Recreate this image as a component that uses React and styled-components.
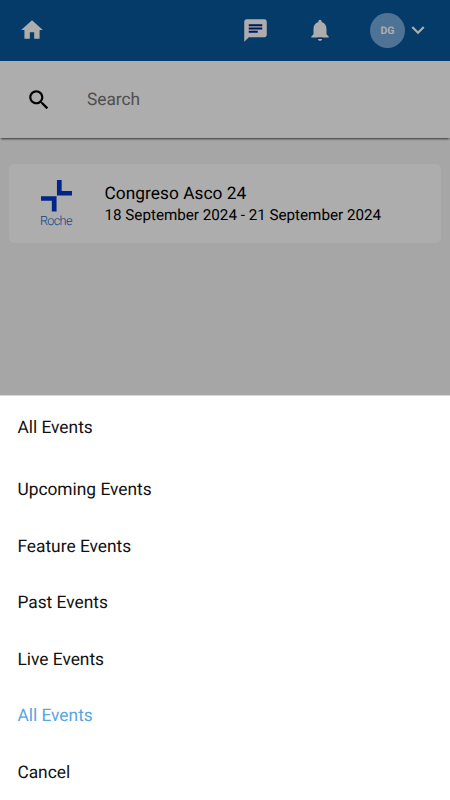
import { useState } from 'react';
import { styled, createGlobalStyle } from 'styled-components';

const GlobalStyle = createGlobalStyle`
  * {
    box-sizing: border-box;
  }

  body {
    margin: 0;
    font-family: Roboto, 'Liberation Sans', sans-serif;
    text-rendering: geometricPrecision;
  }
`;

const options = [
  { id: 'upcoming', label: 'Upcoming Events' },
  { id: 'feature', label: 'Feature Events' },
  { id: 'past', label: 'Past Events' },
  { id: 'live', label: 'Live Events' },
  { id: 'all', label: 'All Events' },
  { id: 'cancel', label: 'Cancel' },
];

const HomeIcon = () => (
  <Icon $size={26} viewBox="0 0 24 24">
    <path d="M10 20v-6h4v6h5v-8h3L12 3 2 12h3v8z" />
  </Icon>
);

const ChatIcon = () => (
  <Icon $size={27} viewBox="0 0 24 24">
    <path d="M4 2h16c1.100 0 2 .9 2 2v12c0 1.100-.9 2-2 2H6l-4 4V4c0-1.100.9-2 2-2z" />
    <path fill="#00208c" d="M6 6.500h12v1.800H6zM6 9.400h12v1.800H6zM6 12.300h8v1.800H6z" />
  </Icon>
);

const BellIcon = () => (
  <Icon $size={26} viewBox="0 0 24 24">
    <path d="M12 22c1.100 0 2-.9 2-2h-4c0 1.100.89 2 2 2zm6-6v-5c0-3.070-1.640-5.640-4.500-6.320V4c0-.83-.67-1.500-1.500-1.500s-1.500.67-1.500 1.500v.68C7.630 5.360 6 7.920 6 11v5l-2 2v1h16v-1l-2-2z" />
    <path fill="#00208c" d="M9.500 19.100h5v.9h-5z" />
  </Icon>
);

const ArrowIcon = () => (
  <Icon $size={26} viewBox="0 0 24 24">
    <path d="M7.410 8.590 12 13.170l4.590-4.580L18 10l-6 6-6-6z" />
  </Icon>
);

const SearchIcon = () => (
  <Icon $size={26} viewBox="0 0 24 24">
    <path d="M15.500 14h-.79l-.28-.27C15.410 12.590 16 11.110 16 9.500 16 5.910 13.090 3 9.500 3S3 5.910 3 9.500 5.910 16 9.500 16c1.610 0 3.090-.59 4.230-1.570l.27.28v.79l5 4.990L20.490 19l-4.990-5zm-6 0C7.010 14 5 11.990 5 9.500S7.010 5 9.500 5 14 7.010 14 9.500 11.990 14 9.500 14z" />
  </Icon>
);

const App = () => {
  const [selected, setSelected] = useState('all');
  const [search, setSearch] = useState('');

  return (
    <Screen>
      <GlobalStyle />
      <Header>
        <HomeButton>
          <HomeIcon />
        </HomeButton>
        <Actions>
          <ChatIcon />
          <BellIcon />
          <Profile>
            <Avatar>DG</Avatar>
            <ArrowIcon />
          </Profile>
        </Actions>
      </Header>

      <SearchBar>
        <SearchIcon />
        <SearchInput
          placeholder="Search"
          value={search}
          onChange={(e) => setSearch(e.target.value)}
        />
      </SearchBar>

      <EventList>
        <EventCard>
          <Brand>
            <BrandMark viewBox="0 0 32 32">
              <path d="M16.200 0h4.800v11.200h11v4.600H16.200zM0 16.400h15.800V32h-4.800V21H0z" />
            </BrandMark>
            <BrandName>Roche</BrandName>
          </Brand>
          <EventInfo>
            <EventTitle>Congreso Asco 24</EventTitle>
            <EventDate>18 September 2024 - 21 September 2024</EventDate>
          </EventInfo>
        </EventCard>
      </EventList>

      <Backdrop>
        <Sheet>
          <SheetTitle>All Events</SheetTitle>
          {options.map((option) => (
            <Option
              key={option.id}
              $active={selected === option.id}
              onClick={() => setSelected(option.id)}
            >
              {option.label}
            </Option>
          ))}
        </Sheet>
      </Backdrop>
    </Screen>
  );
};

const Screen = styled.div`
  position: relative;
  height: 800px;
  overflow: hidden;
  background-color: #f5f5f5;
`;

const Icon = styled.svg`
  display: block;
  flex-shrink: 0;
  width: ${(props) => props.$size}px;
  height: ${(props) => props.$size}px;
  fill: currentColor;
`;

const Header = styled.header`
  display: flex;
  align-items: center;
  justify-content: space-between;
  height: 61px;
  padding: 0 19px 1px;
  color: #fff;
  background-color: #08589a;
`;

const HomeButton = styled.div`
  cursor: pointer;
`;

const Actions = styled.div`
  display: flex;
  align-items: center;
  gap: 37.5px;
`;

const Profile = styled.div`
  display: flex;
  align-items: center;
  cursor: pointer;
`;

const Avatar = styled.div`
  display: flex;
  align-items: center;
  justify-content: center;
  width: 35px;
  height: 35px;
  border-radius: 50%;
  font-size: 10.5px;
  font-weight: 700;
  background-color: #73aadc;
`;

const SearchBar = styled.div`
  display: flex;
  align-items: center;
  gap: 35px;
  height: 77px;
  padding: 0 26px;
  background-color: #fff;
  box-shadow: 0 2px 2px -1px rgba(0, 0, 0, 0.7);
`;

const SearchInput = styled.input`
  flex: 1;
  padding: 0;
  border: none;
  outline: none;
  font-family: inherit;
  font-size: 17.3px;
  text-rendering: inherit;
  background-color: transparent;

  &::placeholder {
    color: #757575;
  }
`;

const EventList = styled.div`
  padding: 26px 9px;
`;

const EventCard = styled.div`
  display: flex;
  height: 78.5px;
  padding: 16px 31px;
  border-radius: 5px;
  background-color: #fff;
`;

const Brand = styled.div`
  width: 64.5px;
`;

const BrandMark = styled.svg`
  display: block;
  width: 31.5px;
  height: 31.5px;
  margin: 0.4px 0 0 0.6px;
  fill: #0038c8;
`;

const BrandName = styled.div`
  font-size: 12.7px;
  font-weight: 300;
  line-height: 20px;
  letter-spacing: -0.7px;
  color: #1268c9;
`;

const EventInfo = styled.div`
  padding-top: 3px;
  white-space: nowrap;
  color: #000;
`;

const EventTitle = styled.div`
  font-size: 17.3px;
  line-height: 22px;
  letter-spacing: 0.05px;
`;

const EventDate = styled.div`
  font-size: 15.2px;
  line-height: 21px;
`;

const Backdrop = styled.div`
  position: absolute;
  inset: 0;
  display: flex;
  align-items: flex-end;
  background-color: rgba(0, 0, 0, 0.32);
`;

const Sheet = styled.div`
  width: 100%;
  height: 405px;
  border-top: 1px solid #d6d6d6;
  background-color: #fff;
`;

const SheetTitle = styled.div`
  height: 66px;
  padding: 0 17.4px;
  font-size: 17.35px;
  line-height: 65px;
  color: #111;
`;

const Option = styled.div`
  height: 56.5px;
  padding: 0 17.4px;
  font-size: 17.35px;
  line-height: 56.5px;
  color: ${(props) => (props.$active ? '#57a5e2' : '#111')};
  cursor: pointer;
`;

export default App;
